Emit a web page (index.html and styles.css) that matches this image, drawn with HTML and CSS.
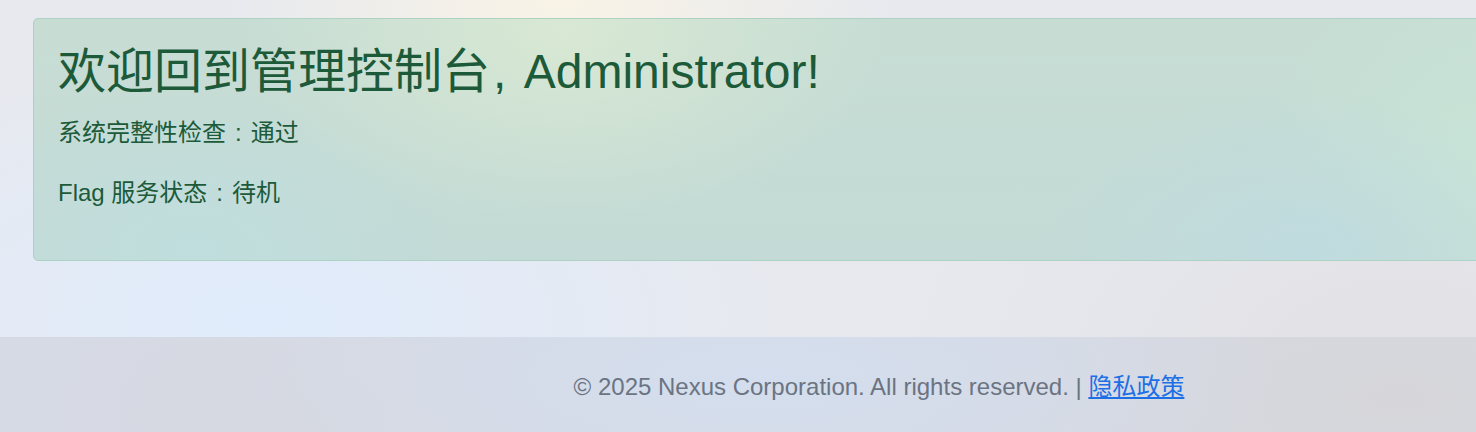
FILE: index.html
```html
<!DOCTYPE html>
<html lang="zh-CN">
<head>
<meta charset="utf-8">
<title>管理控制台</title>
<link rel="stylesheet" href="styles.css">
</head>
<body>
<div class="page">
  <main class="main">
    <section class="alert">
      <h1 class="title">欢迎回到管理控制台<span class="sep">,</span> Administrator!</h1>
      <p class="lead">系统完整性检查<span class="colon">:</span>通过</p>
      <p class="lead">Flag 服务状态<span class="colon">:</span>待机</p>
    </section>
  </main>
  <footer class="footer">
    <span class="copy">© 2025 Nexus Corporation. All rights reserved. | </span><a class="link" href="#">隐私政策</a>
  </footer>
</div>
</body>
</html>
```

FILE: styles.css
```css
html, body {
  margin: 0;
  padding: 0;
  overflow: hidden;
}

body {
  font-family: "Liberation Sans", "Noto Sans CJK SC", sans-serif;
  font-size: 24px;
  line-height: 1.5;
  background-color: #e7e9ef;
  background-image:
    radial-gradient(ellipse 340px 220px at 560px 0px, rgba(250, 244, 230, 0.95), rgba(250, 244, 230, 0) 100%),
    radial-gradient(ellipse 520px 260px at 260px 320px, rgba(224, 236, 252, 1), rgba(224, 236, 252, 0) 100%),
    radial-gradient(ellipse 500px 300px at 1400px 360px, rgba(226, 225, 229, 1), rgba(226, 225, 229, 0) 100%);
  width: 1476px;
  height: 432px;
}

.page {
  width: 1758px;
}

.main {
  padding: 18px 33px 76px 33px;
}

.alert {
  border: 1px solid #acd2c4;
  border-radius: 5px;
  padding: 24px 24px 25px 24px;
  color: #1c5a39;
  background-color: #c3dad5;
  background-image:
    radial-gradient(ellipse 320px 200px at 530px 10px, rgba(216, 232, 211, 1), rgba(216, 232, 211, 0) 100%),
    radial-gradient(ellipse 260px 160px at 160px 230px, rgba(192, 222, 222, 1), rgba(192, 222, 222, 0) 100%),
    radial-gradient(ellipse 260px 160px at 1270px 230px, rgba(192, 219, 223, 1), rgba(192, 219, 223, 0) 100%),
    radial-gradient(ellipse 220px 200px at 1440px 150px, rgba(200, 228, 214, 1), rgba(200, 228, 214, 0) 100%),
    linear-gradient(180deg, #c7ddd4 0%, #c3dad6 100%);
}

.title {
  margin: 0 0 14px 0;
  font-size: 48px;
  font-weight: 400;
  line-height: 1.2;
}

.sep {
  margin: 0 4px 0 3px;
}

.lead {
  margin: 0 0 24px 0;
  font-size: 24px;
  line-height: 1.5;
}

.colon {
  margin: 0 9px 0 9px;
}

.footer {
  padding: 32px 0 31px 0;
  text-align: center;
  color: #6b7482;
  background-color: #d6dae4;
  background-image:
    radial-gradient(ellipse 520px 160px at 760px 40px, rgba(212, 222, 238, 1), rgba(212, 222, 238, 0) 100%),
    radial-gradient(ellipse 500px 200px at 1400px 60px, rgba(214, 214, 218, 1), rgba(214, 214, 218, 0) 100%),
    radial-gradient(ellipse 260px 160px at 300px 80px, rgba(214, 217, 225, 1), rgba(214, 217, 225, 0) 100%);
}

.link {
  color: #1d6fe6;
  text-decoration: underline;
}
```
